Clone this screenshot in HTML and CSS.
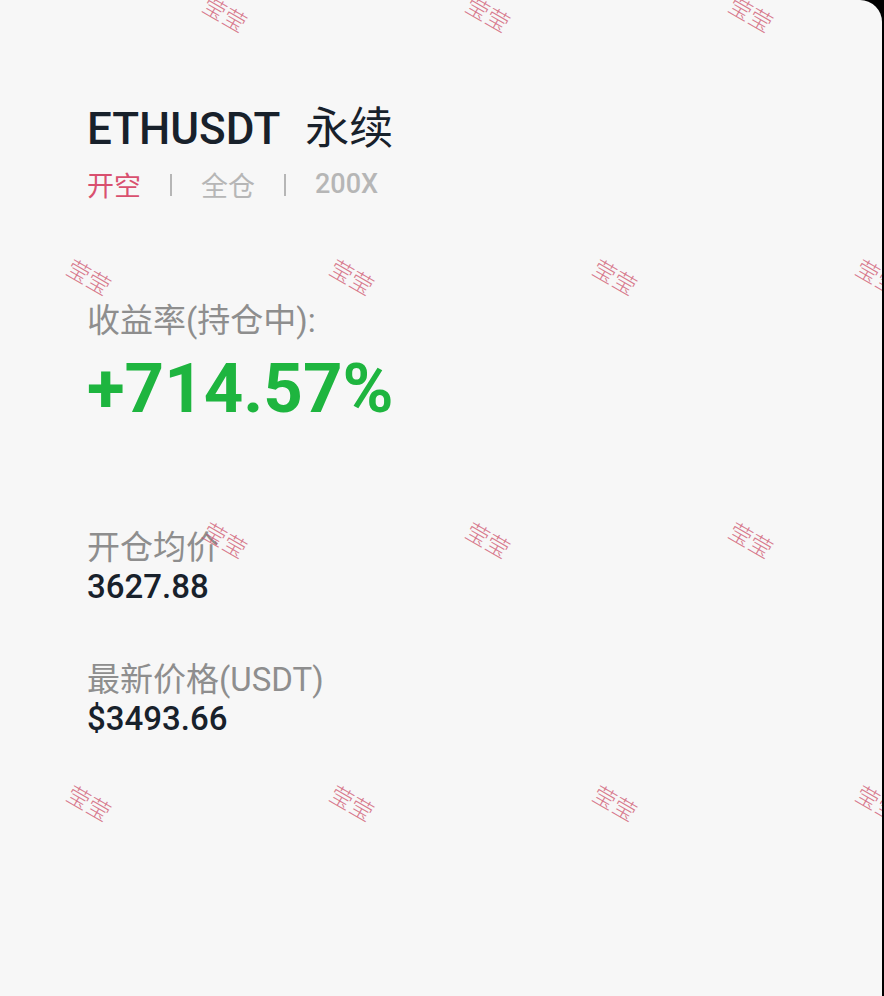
FILE: index.html
```html
<!DOCTYPE html>
<html>
<head>
    <meta charset="UTF-8">
    <title>ETHUSDT 永续</title>
    <link rel="stylesheet" href="styles.css">
</head>
<body>
<div class="card">
    <div class="content">
        <div class="title">
            <span class="symbol">ETHUSDT</span>
            <span class="kind">永续</span>
        </div>
        <div class="tags">
            <span class="side">开空</span>
            <span class="sep"></span>
            <span class="tag">全仓</span>
            <span class="sep"></span>
            <span class="tag lev">200X</span>
        </div>

        <div class="label roi-label">收益率(持仓中):</div>
        <div class="roi">+714.57%</div>

        <div class="label entry-label">开仓均价</div>
        <div class="value">3627.88</div>

        <div class="label last-label">最新价格(USDT)</div>
        <div class="value">$3493.66</div>
    </div>

    <div class="watermarks">
        <div class="wm-row odd">
            <span class="wm">莹莹</span><span class="wm">莹莹</span><span class="wm">莹莹</span>
        </div>
        <div class="wm-row even">
            <span class="wm">莹莹</span><span class="wm">莹莹</span><span class="wm">莹莹</span><span class="wm">莹莹</span>
        </div>
        <div class="wm-row odd">
            <span class="wm">莹莹</span><span class="wm">莹莹</span><span class="wm">莹莹</span>
        </div>
        <div class="wm-row even">
            <span class="wm">莹莹</span><span class="wm">莹莹</span><span class="wm">莹莹</span><span class="wm">莹莹</span>
        </div>
    </div>
</div>
</body>
</html>
```

FILE: styles.css
```css
body {
    background-color: #000;
    margin: 0;
    padding: 0;
    font-family: Roboto, "Noto Sans CJK SC", sans-serif;
}

.card {
    position: relative;
    width: 882px;
    height: 996px;
    background-color: #f7f7f7;
    border-top-right-radius: 22px;
    overflow: hidden;
}

.content {
    padding: 103px 0 0 87px;
}

.title {
    display: flex;
    align-items: baseline;
    gap: 25px;
    font-size: 44px;
    line-height: 52px;
    color: #18212b;
}

.title .symbol {
    font-weight: 500;
}

.title .kind {
    font-weight: 400;
}

.tags {
    display: flex;
    align-items: center;
    gap: 29px;
    margin-top: 16px;
    font-size: 27px;
    line-height: 33px;
    color: #b6b6b6;
}

.tags .side {
    color: #d9506f;
}

.tags .lev {
    font-weight: 500;
    margin-top: -6px;
}

.tags .sep {
    width: 2px;
    height: 22px;
    background-color: #b6b6b6;
    margin-top: -6px;
}

.label {
    font-size: 33px;
    line-height: 40px;
    color: #8e8e8e;
}

.roi-label {
    margin-top: 97px;
}

.roi {
    margin-top: 6px;
    font-size: 69px;
    line-height: 84px;
    font-weight: 700;
    color: #1eb53f;
}

.entry-label {
    margin-top: 97px;
}

.last-label {
    margin-top: 54px;
}

.value {
    font-size: 33px;
    line-height: 38px;
    font-weight: 500;
    color: #18212b;
}

/* watermark overlay */
.watermarks {
    position: absolute;
    top: 0;
    left: 0;
    right: 0;
    bottom: 0;
    pointer-events: none;
    display: flex;
    flex-direction: column;
    gap: 233px;
    margin-top: -2px;
}

.wm-row {
    display: flex;
    height: 30px;
}

.wm-row.odd {
    padding-left: 94px;
}

.wm-row.even {
    margin-left: -42px;
}

.wm {
    flex: 0 0 263px;
    text-align: center;
    font-family: "Noto Sans CJK SC", sans-serif;
    font-weight: 300;
    font-size: 23px;
    line-height: 30px;
    color: rgba(205, 80, 105, 0.75);
    transform: rotate(30deg);
}
```
